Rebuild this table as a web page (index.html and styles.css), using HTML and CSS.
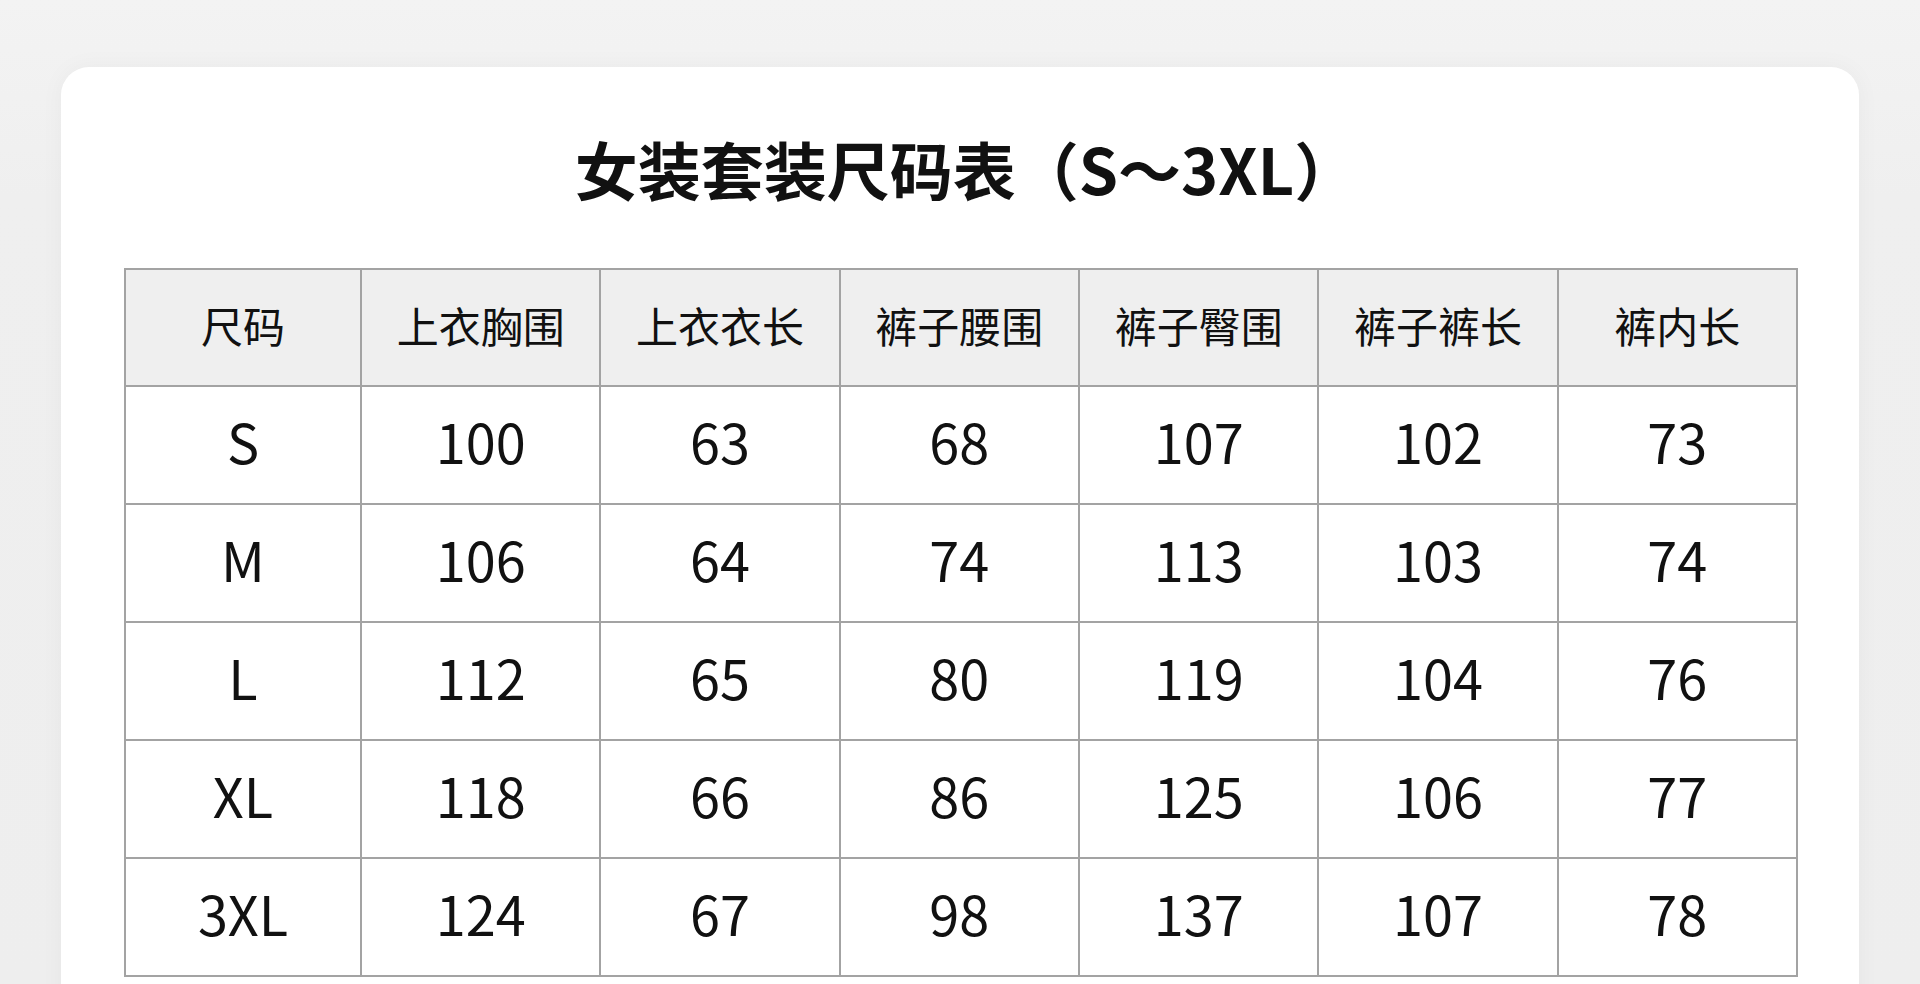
FILE: index.html
```html
<!DOCTYPE html>
<html lang="zh-CN">
<head>
<meta charset="utf-8">
<title>女装套装尺码表</title>
<link rel="stylesheet" href="styles.css">
</head>
<body>
<main class="card">
  <h1 class="title">女装套装尺码表（S～3XL）</h1>
  <table class="size-table">
    <colgroup>
      <col class="col-size">
      <col><col><col><col><col><col>
    </colgroup>
    <thead>
      <tr><th>尺码</th><th>上衣胸围</th><th>上衣衣长</th><th>裤子腰围</th><th>裤子臀围</th><th>裤子裤长</th><th>裤内长</th></tr>
    </thead>
    <tbody>
      <tr><td>S</td><td>100</td><td>63</td><td>68</td><td>107</td><td>102</td><td>73</td></tr>
      <tr><td>M</td><td>106</td><td>64</td><td>74</td><td>113</td><td>103</td><td>74</td></tr>
      <tr><td>L</td><td>112</td><td>65</td><td>80</td><td>119</td><td>104</td><td>76</td></tr>
      <tr><td>XL</td><td>118</td><td>66</td><td>86</td><td>125</td><td>106</td><td>77</td></tr>
      <tr><td>3XL</td><td>124</td><td>67</td><td>98</td><td>137</td><td>107</td><td>78</td></tr>
    </tbody>
  </table>
</main>
</body>
</html>
```

FILE: styles.css
```css
html, body {
  margin: 0;
  padding: 0;
}
body {
  background: linear-gradient(180deg, #f3f3f3 0%, #efefef 20%, #eeeeee 100%);
  font-family: "Noto Sans CJK SC", "Noto Sans", sans-serif;
  color: #111;
  overflow: hidden;
  height: 984px;
}
.card {
  margin: 67px 0 0 61px;
  width: 1798px;
  box-sizing: border-box;
  padding: 69px 61px 40px 63px;
  background: #fff;
  border-radius: 28px;
  box-shadow: 0 0 24px rgba(0, 0, 0, 0.04);
}
.title {
  margin: 0 0 68px 10px;
  font-size: 63px;
  line-height: 64px;
  font-weight: 700;
  text-align: center;
  color: #111;
}
.size-table {
  width: 100%;
  border-collapse: collapse;
  table-layout: fixed;
}
.col-size {
  width: 236px;
}
.size-table th,
.size-table td {
  border: 2px solid #a3a3a3;
  text-align: center;
  vertical-align: middle;
  padding: 0;
}
.size-table thead tr {
  height: 117px;
}
.size-table tbody tr {
  height: 118px;
}
.size-table th {
  background: #efefef;
  font-size: 42px;
  font-weight: 400;
  padding-bottom: 7px;
}
.size-table td {
  font-size: 54px;
  font-weight: 400;
  padding-bottom: 10px;
}
```
